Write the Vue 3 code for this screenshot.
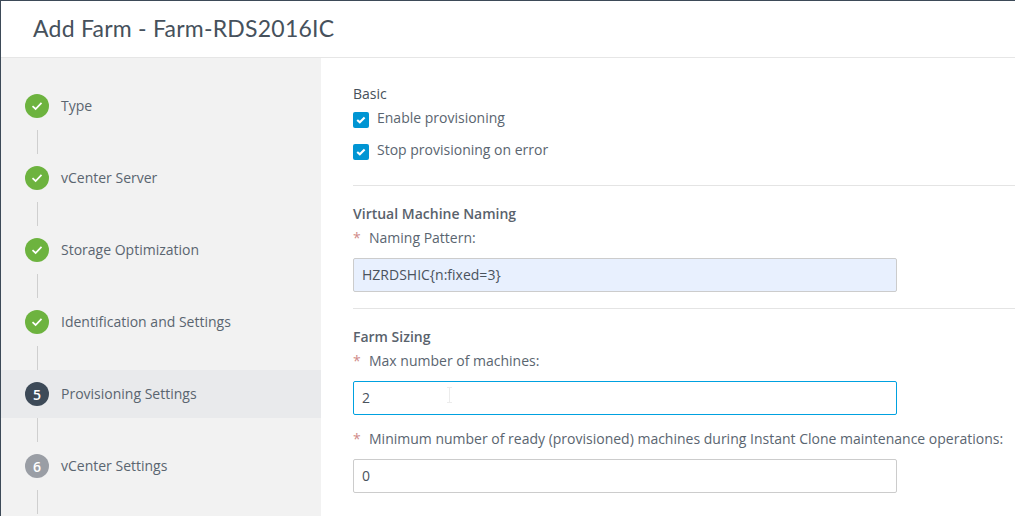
<script setup>
const steps = [
  { label: 'Type', state: 'done' },
  { label: 'vCenter Server', state: 'done' },
  { label: 'Storage Optimization', state: 'done' },
  { label: 'Identification and Settings', state: 'done' },
  { label: 'Provisioning Settings', state: 'active', n: 5 },
  { label: 'vCenter Settings', state: 'todo', n: 6 },
]
</script>

<template>
  <div class="dialog">
    <header class="head"><h1>Add Farm - Farm-RDS2016IC</h1></header>
    <div class="body">
      <nav class="side">
        <template v-for="s in steps" :key="s.label">
          <div class="step" :class="{ current: s.state === 'active' }">
            <span class="dot" :class="s.state">
              <svg v-if="s.state === 'done'" width="12" height="10" viewBox="0 0 12 10">
                <path d="M1.5 5.2 L4.6 8 L10.5 1.8" fill="none" stroke="#fff" stroke-width="1.7" />
              </svg>
              <template v-else>{{ s.n }}</template>
            </span>
            <span class="label">{{ s.label }}</span>
          </div>
          <div class="link"><i></i></div>
        </template>
      </nav>
      <main class="main">
        <section class="sec first">
          <h2 class="light">Basic</h2>
          <label class="check one">
            <span class="box"><svg width="10" height="8" viewBox="0 0 10 8"><path d="M1.2 4 L3.8 6.3 L8.6 1.6" fill="none" stroke="#fff" stroke-width="2.1" /></svg></span>
            Enable provisioning
          </label>
          <label class="check two">
            <span class="box"><svg width="10" height="8" viewBox="0 0 10 8"><path d="M1.2 4 L3.8 6.3 L8.6 1.6" fill="none" stroke="#fff" stroke-width="2.1" /></svg></span>
            Stop provisioning on error
          </label>
        </section>
        <section class="sec second">
          <h2>Virtual Machine Naming</h2>
          <div class="req"><b>*</b>Naming Pattern:</div>
          <div class="field auto">HZRDSHIC{n:fixed=3}</div>
        </section>
        <section class="sec third">
          <h2>Farm Sizing</h2>
          <div class="req"><b>*</b>Max number of machines:</div>
          <div class="field focus">2
            <svg class="beam" width="7" height="16" viewBox="0 0 7 16">
              <path d="M1 .5 H6 M3.5 .5 V15.5 M1 15.5 H6" fill="none" stroke="#ececec" stroke-width="1" />
            </svg>
          </div>
          <div class="req lower"><b>*</b>Minimum number of ready (provisioned) machines during Instant Clone maintenance operations:</div>
          <div class="field">0</div>
        </section>
      </main>
    </div>
  </div>
</template>

<style>
html, body { margin: 0; background: #fff; overflow: hidden; }
</style>

<style scoped>
.dialog {
  width: 1015px;
  height: 516px;
  box-sizing: border-box;
  border-top: 1px solid #3d4a58;
  border-left: 1px solid #3d4a58;
  overflow: hidden;
  font-family: "Open Sans", "Liberation Sans", sans-serif;
  color: #565656;
  background: #fff;
}
.head {
  height: 56px;
  border-bottom: 1px solid #e6e6e6;
  display: flex;
  align-items: center;
  padding-left: 32px;
  padding-bottom: 2px;
  box-sizing: content-box;
  height: 54px;
}
h1 {
  margin: 0;
  font: 400 23px/1 Lato, "Liberation Sans", sans-serif;
  letter-spacing: 0.23px;
  color: #46515c;
}
.body { display: flex; height: 458px; }
.side {
  width: 320px;
  flex: none;
  background: #f2f2f2;
  padding-top: 24px;
}
.step {
  height: 48px;
  display: flex;
  align-items: center;
  padding-left: 24px;
}
.step.current { background: #e9eaec; }
.dot {
  width: 24px;
  height: 24px;
  border-radius: 50%;
  display: flex;
  align-items: center;
  justify-content: center;
  color: #fff;
  font-size: 14px;
  font-weight: 600;
  flex: none;
}
.dot.done { background: #6db33f; }
.dot.active { background: #3d4a58; }
.dot.todo { background: #9a9ea5; }
.label { margin-left: 12px; padding-bottom: 2px; font-size: 14px; color: #5a6570; }
.link { height: 24px; padding-left: 36px; }
.link i { display: block; width: 1px; height: 24px; background: #cfcfcf; }
.main { flex: 1; padding-left: 32px; min-width: 0; }
.sec { border-bottom: 1px solid #e4e4e4; box-sizing: border-box; }
.sec.first { height: 128px; padding-top: 26px; }
.sec.second { height: 123px; padding-top: 18px; }
.sec.third { border-bottom: 0; padding-top: 18px; }
h2 {
  margin: 0;
  font-size: 14px;
  line-height: 20px;
  font-weight: 600;
  color: #59626c;
}
h2.light { font-weight: 500; color: #46505a; }
.check {
  display: flex;
  align-items: center;
  height: 20px;
  font-size: 14px;
  color: #5a6570;
}
.check.one { margin-top: 3px; }
.check.two { margin-top: 12px; }
.box {
  width: 16px;
  height: 16px;
  border-radius: 2px;
  background: #0095d3;
  margin-right: 8px;
  display: flex;
  align-items: center;
  justify-content: center;
  position: relative;
  top: 3px;
}
.req {
  margin-top: 4px;
  height: 20px;
  line-height: 20px;
  font-size: 14px;
  color: #5a6570;
  white-space: nowrap;
}
.req b {
  display: inline-block;
  width: 16px;
  color: #d08a88;
  font-weight: 400;
}
.req.lower { margin-top: 14px; }
.field {
  width: 544px;
  height: 34px;
  margin-top: 10px;
  box-sizing: border-box;
  border: 1px solid #ccc;
  border-radius: 2px;
  padding-left: 8px;
  font-size: 14px;
  line-height: 32px;
  color: #4a535d;
  position: relative;
}
.field.auto { background: #e8f0fe; }
.field.focus { border-color: #00a1e0; }
.beam {
  position: absolute;
  left: 92px;
  top: 5px;
}
</style>
